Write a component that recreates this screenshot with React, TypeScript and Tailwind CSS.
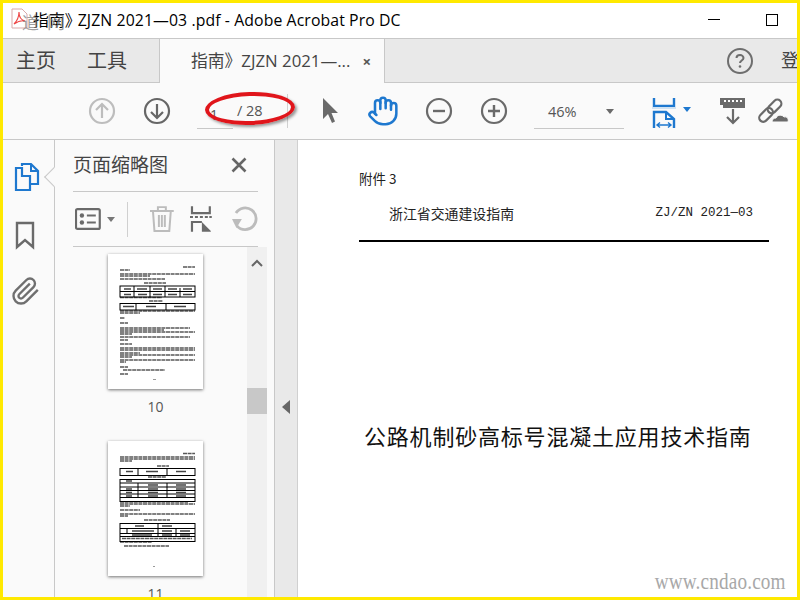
import React from "react";
import { Hand } from "lucide-react";

const SANS = "font-['Open_Sans','Noto_Sans_CJK_SC',sans-serif]";

type Line = [number, number, number];

function PageLines({ lines }: { lines: Line[] }) {
  return (
    <g stroke="#3c3c3c" strokeWidth="1.5" strokeDasharray="4 0.6" opacity="0.85">
      {lines.map(([y, x, w], i) => (
        <path key={i} d={`M${x} ${y}H${x + w}`} />
      ))}
    </g>
  );
}

function Thumb10() {
  const lines: Line[] = [
    [13, 75, 12], [16, 12, 10], [20, 12, 75], [22, 12, 30], [25, 12, 45], [29, 36, 22],
    [43.5, 12, 42], [47, 41, 14], [57, 12, 75], [59, 12, 20], [64, 12, 5], [69, 12, 8],
    [74, 12, 70], [76, 12, 44], [78, 12, 75], [80, 12, 12], [83, 12, 70], [86, 12, 8],
    [90, 12, 12], [94, 12, 75], [96, 12, 75], [99, 12, 20], [101, 12, 75], [103, 12, 12],
    [106, 12, 75], [108, 12, 6], [113, 12, 8], [116, 15, 42], [120, 12, 8],
  ];
  return (
    <svg width="95" height="135" viewBox="0 0 95 135" className="block">
      <rect width="95" height="135" fill="#fff" />
      <PageLines lines={lines} />
      <g fill="none" stroke="#000" strokeWidth="1">
        <rect x="12" y="32" width="75" height="11" />
        <path d="M12 37.500H87M26 32V43M42 32V43M57 32V43M72 34V43" />
        <rect x="12" y="49.500" width="75" height="6.500" />
        <path d="M28 49.500V56M58 49.500V56" />
      </g>
      <path d="M16 35H23M29 35H39M45 35H54M60 35H69M75 35H84M16 40.500H23M30 40.500H39M45 40.500H54M60 40.500H69M75 40.500H84M15 52.500H26M38 52.500H48M66 52.500H78" stroke="#444" strokeWidth="1.500" />
      <rect x="45" y="125" width="3" height="1" fill="#999" />
    </svg>
  );
}

function Thumb11() {
  const lines: Line[] = [
    [12.500, 75, 12], [16, 12, 75], [18, 12, 75], [20, 12, 12], [25, 49, 12], [36, 40, 18],
    [61, 12, 68], [63, 12, 75], [65, 12, 10], [69, 12, 20], [73, 12, 75], [75, 12, 8],
    [79, 36, 26], [97.500, 14, 70], [101, 12, 32], [105, 16, 45],
  ];
  return (
    <svg width="95" height="135" viewBox="0 0 95 135" className="block">
      <rect width="95" height="135" fill="#fff" />
      <PageLines lines={lines} />
      <g fill="none" stroke="#000" strokeWidth="1">
        <rect x="12" y="27.500" width="75" height="7" />
        <path d="M30 27.500V34.500M59 27.500V34.500" />
        <rect x="12" y="38.500" width="75" height="22" />
        <path d="M12 42H87M12 46H87M12 49.500H87M12 53H87M12 56.500H87M30 42V56.500M59 42V56.500" />
        <rect x="12" y="82.500" width="75" height="18" />
        <path d="M12 87.500H87M12 92.500H87M12 95.500H87M50 82.500V95.500M68 87.500V95.500M19 87.500V92.500" />
      </g>
      <path d="M18 30.500H25M38 30.500H50M68 30.500H78M18 40H24M40 44H50M68 44H78M18 48H24M40 48H50M68 48H78M18 51.500H24M40 51.500H50M68 51.500H78M18 55H24M40 55H50M68 55H78M27 85H36M54 85H64M24 90H46M54 90H64M72 90H82M24 94H44M54 94H64M72 94H82" stroke="#444" strokeWidth="1.400" />
      <rect x="45" y="125" width="2" height="1" fill="#999" />
    </svg>
  );
}

function Sep() {
  return <div className="w-px h-[34px] bg-[#d0d0d0] shrink-0" />;
}

export default function App() {
  return (
    <div className={`w-[800px] h-[600px] border-[3px] border-[#ffe900] bg-white overflow-hidden flex flex-col relative ${SANS}`}>
      {/* Title bar */}
      <div className="h-[35px] flex items-center shrink-0 bg-white relative">
        <div className="relative w-[30px] h-[35px] shrink-0">
          <svg width="18" height="22" viewBox="0 0 18 22" className="absolute left-[8px] top-[5px]">
            <path d="M1 1H11L16 6V20H1Z" fill="#fff" stroke="#d9a9a9" strokeWidth="1" />
            <path d="M3 16C6 13 8 9 8 4C8 9 10 12 14 13C10 12 6 14 3 16Z" fill="none" stroke="#ee4444" strokeWidth="1.100" />
          </svg>
        </div>
        <span className="text-[15.8px] text-black whitespace-nowrap tracking-[0.1px]"><span className="inline-block -mr-[3px]">指南》</span>ZJZN 2021—03 .pdf - Adobe Acrobat Pro DC</span>
        <span className="absolute left-[19px] top-[10px] text-[17px] leading-[20px] text-[#808080] opacity-75">道</span>
        <span className="absolute left-[44px] top-[9px] text-[18px] leading-[20px] text-[#808080] opacity-75">网</span>
        <div className="ml-auto flex items-center">
          <div className="w-3 h-px bg-black mr-[46px] -mt-[3px]" />
          <div className="w-3 h-3 border border-black mr-[19px] -mt-[1px]" />
        </div>
      </div>

      {/* Tab bar */}
      <div className="h-[45px] shrink-0 bg-[#e9e9e9] border-y border-[#c8c8c8] flex items-stretch">
        <div className="flex items-center text-[#444] text-[20px] pl-[13px] w-[156px] shrink-0 gap-[31px]">
          <span>主页</span>
          <span>工具</span>
        </div>
        <div className="w-[226px] shrink-0 bg-[#fafafa] border-x border-[#c8c8c8] -mb-px flex items-center pl-[31px] text-[16.8px] text-[#444] whitespace-nowrap">
          <span>指南》ZJZN 2021—...</span>
          <span className="ml-[12px] text-[#555] text-[15px] font-bold leading-none">×</span>
        </div>
        <div className="flex-1 min-w-0 flex items-center relative overflow-hidden">
          <svg width="28" height="28" viewBox="0 0 28 28" className="ml-[341px] shrink-0">
            <circle cx="14" cy="14" r="12" fill="none" stroke="#6e6e6e" strokeWidth="2" />
            <path d="M10.500 11C10.500 9 12 8 14 8S17.500 9.500 17.500 11C17.500 13.500 14 13.500 14 16" fill="none" stroke="#6e6e6e" strokeWidth="2" />
            <circle cx="14" cy="19.500" r="1.300" fill="#6e6e6e" />
          </svg>
          <span className="ml-[27px] text-[#444] text-[18px] whitespace-nowrap">登</span>
        </div>
      </div>

      {/* Toolbar */}
      <div className="h-[57px] shrink-0 bg-[#fafafa] border-b border-[#c8c8c8] flex items-center relative">
        <svg width="28" height="28" viewBox="0 0 28 28" className="ml-[85px] shrink-0">
          <circle cx="14" cy="14" r="12" fill="none" stroke="#bdbdbd" strokeWidth="2.200" />
          <path d="M14 21V7M8 13L14 7L20 13" fill="none" stroke="#bdbdbd" strokeWidth="2.200" />
        </svg>
        <svg width="28" height="28" viewBox="0 0 28 28" className="ml-[27px] shrink-0">
          <circle cx="14" cy="14" r="12" fill="none" stroke="#666" strokeWidth="2.200" />
          <path d="M14 7V21M8 15L14 21L20 15" fill="none" stroke="#666" strokeWidth="2.200" />
        </svg>
        <div className="ml-[26px] w-[36px] h-[33px] border-b border-[#c8c8c8] text-[14px] text-[#555] pt-[8px] pl-[13px] shrink-0 mt-[3px]">1</div>
        <span className="ml-[4px] text-[14.5px] text-[#555] w-[50px] shrink-0 whitespace-nowrap">/ 28</span>
        <Sep />
        <svg width="20" height="28" viewBox="0 0 20 28" className="ml-[33px] shrink-0">
          <path d="M2 1V22L7 17L11 26L14 24.500L10.500 16H17Z" fill="#6a6a6a" />
        </svg>
        <Hand size={32} color="#1e78cf" strokeWidth={1.900} className="ml-[26px] shrink-0 -mr-[2px]" />
        <svg width="28" height="28" viewBox="0 0 28 28" className="ml-[28px] shrink-0">
          <circle cx="14" cy="14" r="12" fill="none" stroke="#6a6a6a" strokeWidth="2.200" />
          <path d="M8 14H20" stroke="#6a6a6a" strokeWidth="2.400" />
        </svg>
        <svg width="28" height="28" viewBox="0 0 28 28" className="ml-[27px] shrink-0">
          <circle cx="14" cy="14" r="12" fill="none" stroke="#6a6a6a" strokeWidth="2.200" />
          <path d="M8 14H20M14 8V20" stroke="#6a6a6a" strokeWidth="2.400" />
        </svg>
        <div className="ml-[26px] w-[90px] h-[33px] border-b border-[#c8c8c8] flex items-center shrink-0 mt-[3px] pl-[14px] text-[14.5px] text-[#555]">
          <span>46%</span>
          <span className="ml-[29px] w-0 h-0 border-x-[4px] border-x-transparent border-t-[5px] border-t-[#6a6a6a] -mt-[1px]" />
        </div>
        <svg width="24" height="31" viewBox="0 0 24 31" className="ml-[28px] shrink-0 mt-[4px]">
          <path d="M2 0V8H22V0" fill="none" stroke="#1e78cf" strokeWidth="2.400" />
          <path d="M0 10H24" stroke="#cfe2f3" strokeWidth="2" />
          <path d="M2 30V14H14L22 21V30" fill="none" stroke="#1e78cf" strokeWidth="2.400" />
          <path d="M14 14V21H22" fill="none" stroke="#1e78cf" strokeWidth="2" />
          <path d="M5 27H19M8 24.500L5 27L8 29.500M16 24.500L19 27L16 29.500" fill="none" stroke="#1e78cf" strokeWidth="1.400" />
        </svg>
        <span className="ml-[7px] w-0 h-0 border-x-[4px] border-x-transparent border-t-[5px] border-t-[#1e78cf] shrink-0 -mt-[3px]" />
        <svg width="25" height="28" viewBox="0 0 25 28" className="ml-[29px] shrink-0">
          <path d="M0 1H25V11H3V8H0Z" fill="#6a6a6a" />
          <path d="M4 4H6M8 4H10M12 4H14M16 4H18M20 4H22" stroke="#fff" strokeWidth="2" />
          <path d="M13 12V26M7 20L13 26L19 20" fill="none" stroke="#6a6a6a" strokeWidth="2.200" />
        </svg>
        <svg width="32" height="30" viewBox="0 0 32 30" className="ml-[13px] shrink-0">
          <g fill="none" stroke="#6a6a6a" strokeWidth="2.200" transform="rotate(-45 13 14)">
            <rect x="-2" y="10" width="16" height="8" rx="4" />
            <rect x="10" y="10" width="16" height="8" rx="4" />
          </g>
          <path d="M14 26C14 23 16 22 18 22C19 19 24 18 26 21C29 20 31 23 30 26Z" fill="#6a6a6a" stroke="#fafafa" strokeWidth="1" />
        </svg>
        {/* Red annotation ellipse */}
        <div className="absolute left-[202px] top-[9px] w-[90px] h-[33px] rounded-[50%] border-[4px] border-[#e0151b] -rotate-[2deg] shadow-[2px_2px_3px_rgba(0,0,0,0.4)]" />
      </div>

      {/* Main */}
      <div className="flex-1 min-h-0 flex">
        {/* Left rail */}
        <div className="w-[52px] shrink-0 bg-[#fafafa] border-r border-[#c8c8c8] flex flex-col items-center pt-[22px] relative">
          <svg width="26" height="30" viewBox="0 0 26 30" className="-ml-[3px]">
            <path d="M8 4V2H17L24 9V22H16" fill="none" stroke="#1e78cf" strokeWidth="2.200" />
            <path d="M17 2V9H24" fill="none" stroke="#1e78cf" strokeWidth="2" />
            <path d="M8 6H2V28H16V14H8Z" fill="none" stroke="#1e78cf" strokeWidth="2.200" />
          </svg>
          <svg width="20" height="30" viewBox="0 0 20 30" className="mt-[29px] -ml-[8px]">
            <path d="M2 2H18V26L10 19L2 26Z" fill="none" stroke="#6a6a6a" strokeWidth="2.400" />
          </svg>
          <svg width="30" height="30" viewBox="0 0 24 24" className="mt-[25px] -ml-[6px]" fill="none" stroke="#6f6f6f" strokeWidth="1.900">
            <path d="M21.440 11.050l-9.190 9.190a6 6 0 0 1-8.490-8.490l8.570-8.570A4 4 0 1 1 18 8.840l-8.590 8.570a2 2 0 0 1-2.830-2.830l8.490-8.480" />
          </svg>
          <div className="absolute right-[-7px] top-[30px] w-[14px] h-[14px] rotate-45 bg-[#fafafa] border-l border-b border-[#c8c8c8]" />
        </div>

        {/* Thumbnail panel */}
        <div className="w-[220px] shrink-0 bg-[#fafafa] border-r border-[#c8c8c8] flex flex-col pl-[18px] pr-[16px] min-h-0">
          <div className="h-[52px] shrink-0 border-b border-[#c8c8c8] flex items-center justify-between">
            <span className="text-[19px] text-[#444] whitespace-nowrap">页面缩略图</span>
            <svg width="16" height="16" viewBox="0 0 16 16" className="mr-[11px] -mt-[2px]">
              <path d="M1.500 1.500L14.500 14.500M14.500 1.500L1.500 14.500" stroke="#666" strokeWidth="2.600" />
            </svg>
          </div>
          <div className="h-[55px] shrink-0 border-b border-[#c8c8c8] flex items-center">
            <svg width="26" height="22" viewBox="0 0 26 22" className="ml-[2px]">
              <rect x="1" y="1" width="24" height="20" rx="1.500" fill="none" stroke="#6a6a6a" strokeWidth="2.200" />
              <circle cx="7" cy="7.500" r="2.200" fill="#6a6a6a" />
              <circle cx="7" cy="14.500" r="2.200" fill="#6a6a6a" />
              <path d="M12 7.500H21M12 14.500H21" stroke="#6a6a6a" strokeWidth="2.200" />
            </svg>
            <span className="ml-[6px] w-0 h-0 border-x-[4px] border-x-transparent border-t-[5px] border-t-[#777]" />
            <div className="ml-[12px] w-px h-[35px] bg-[#d0d0d0]" />
            <svg width="26" height="28" viewBox="0 0 26 28" className="ml-[21px] -mt-[1px]">
              <path d="M1 6H25M9 6V2H17V6M4 6L5.500 26H20.500L22 6M10 10V22M13 10V22M16 10V22" fill="none" stroke="#bcbcbc" strokeWidth="2" />
            </svg>
            <svg width="22" height="28" viewBox="0 0 22 28" className="ml-[16px] -mt-[1px]">
              <path d="M2 1V8H20V1" fill="none" stroke="#6a6a6a" strokeWidth="2.200" />
              <path d="M0 12H3M5 12H8M10 12H13M15 12H18M19.500 12H22" stroke="#6a6a6a" strokeWidth="2" />
              <path d="M2 27V17H12" fill="none" stroke="#6a6a6a" strokeWidth="2.200" />
              <path d="M12 17L21 26V27H12Z" fill="#6a6a6a" />
            </svg>
            <svg width="28" height="28" viewBox="0 0 28 28" className="ml-[18px] -mt-[1px]">
              <path d="M7 21A11 11 0 1 0 6 8" fill="none" stroke="#bcbcbc" strokeWidth="2.800" />
              <path d="M2 14H12L6.500 23Z" fill="#bcbcbc" />
            </svg>
          </div>
          <div className="flex-1 min-h-0 relative overflow-hidden -mr-[9px]">
            <div className="flex flex-col items-center w-[165px] pt-[7px]">
              <div className="shadow-[0_1px_3px_rgba(0,0,0,0.55)] w-[95px] h-[135px] shrink-0">
                <Thumb10 />
              </div>
              <div className="mt-[9px] text-[14px] leading-[18px] text-[#555]">10</div>
              <div className="mt-[25px] shadow-[0_1px_3px_rgba(0,0,0,0.55)] w-[95px] h-[135px] shrink-0">
                <Thumb11 />
              </div>
              <div className="mt-[9px] text-[14px] leading-[18px] text-[#555]">11</div>
            </div>
            <div className="absolute right-0 top-0 bottom-0 w-[20px] bg-[#f0f0f0]">
              <svg width="20" height="16" viewBox="0 0 20 16" className="mt-[8px]">
                <path d="M5 11L10 6L15 11" fill="none" stroke="#666" strokeWidth="2" />
              </svg>
              <div className="absolute left-0 top-[141px] w-[20px] h-[26px] bg-[#c8c8c8]" />
            </div>
          </div>
        </div>

        {/* Collapse strip */}
        <div className="w-[23px] shrink-0 bg-[#e9e9e9] border-r border-[#d0d0d0] flex items-center justify-center">
          <span className="w-0 h-0 border-y-[7px] border-y-transparent border-r-[8px] border-r-[#666] mt-[76px]" />
        </div>

        {/* Document page */}
        <div className="flex-1 min-w-0 bg-white relative pl-[61px] pt-[30px] font-['Noto_Sans_CJK_SC',sans-serif]">
          <div className="text-[13.5px] leading-[16px] text-[#222] whitespace-nowrap">附件 3</div>
          <div className="w-[410px] mt-[18px] pb-[17px] border-b-2 border-black flex justify-between items-center pl-[30px] pr-[16px] text-[#222] whitespace-nowrap h-[38px]">
            <span className="text-[13.9px]">浙江省交通建设指南</span>
            <span className="text-[12.5px] font-['Liberation_Mono',monospace]">ZJ/ZN 2021—03</span>
          </div>
          <div className="w-[410px] mt-[177px] pl-[5px] text-[22px] tracking-[0.8px] text-[#111] whitespace-nowrap">
            公路机制砂高标号混凝土应用技术指南
          </div>
          <div className="absolute right-[11px] bottom-[2px] text-[24px] leading-[28px] tracking-[0.2px] text-[#a8a8a8] font-['Liberation_Serif',serif] scale-x-[0.8] origin-right whitespace-nowrap">
            www.cndao.com
          </div>
        </div>
      </div>
    </div>
  );
}
